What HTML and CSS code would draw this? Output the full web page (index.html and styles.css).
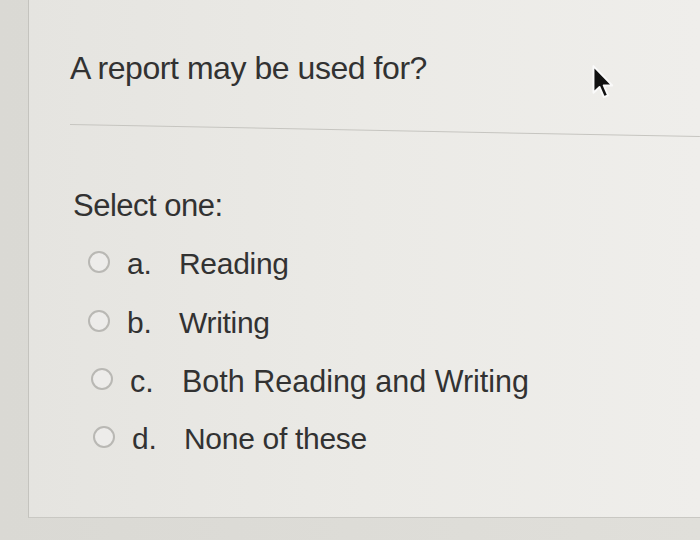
FILE: index.html
```html
<!DOCTYPE html>
<html>
<head>
<meta charset="utf-8">
<link rel="stylesheet" href="styles.css">
</head>
<body>
<div class="page">
  <div class="card">
    <h1 class="question">A report may be used for?</h1>
    <div class="divider"></div>
    <p class="prompt">Select one:</p>
    <ul class="options">
      <li class="option"><span class="radio"></span><span class="letter">a.</span><span class="text">Reading</span></li>
      <li class="option"><span class="radio"></span><span class="letter">b.</span><span class="text">Writing</span></li>
      <li class="option"><span class="radio"></span><span class="letter">c.</span><span class="text">Both Reading and Writing</span></li>
      <li class="option"><span class="radio"></span><span class="letter">d.</span><span class="text">None of these</span></li>
    </ul>
  </div>
  <svg class="cursor" width="24" height="36" viewBox="0 0 13 20">
    <path d="M1.2 1.2 L1.2 16 L4.6 12.8 L7 18.4 L9.3 17.4 L6.9 11.9 L11.6 11.9 Z" fill="#111" stroke="#fafafa" stroke-width="1.1" stroke-linejoin="round"/>
  </svg>
</div>
</body>
</html>
```
FILE: styles.css
```css
html, body {
  margin: 0;
  padding: 0;
}
body {
  width: 700px;
  height: 540px;
  overflow: hidden;
  background: linear-gradient(90deg, #dad9d4 0%, #e0dfda 100%);
  font-family: "Liberation Sans", Arial, sans-serif;
  color: #323232;
}
.page {
  position: relative;
  width: 700px;
  height: 540px;
}
.card {
  margin-left: 28px;
  height: 518px;
  border-left: 1.5px solid #c4c3be;
  border-bottom: 1.5px solid #c9c8c3;
  background: linear-gradient(90deg, #e5e4e0 0%, #ebeae6 50%, #efeeeb 100%);
  box-sizing: border-box;
  padding-top: 50px;
  padding-left: 41px;
}
.question {
  margin: 0;
  font-size: 32px;
  line-height: 36px;
  font-weight: normal;
  letter-spacing: -0.45px;
}
.divider {
  margin-top: 38px;
  height: 1px;
  background: #c6c5c0;
  transform-origin: 0 0;
  transform: rotate(1.1deg);
}
.prompt {
  margin: 63px 0 0 3px;
  font-size: 31px;
  line-height: 36px;
  letter-spacing: -0.5px;
}
.options {
  list-style: none;
  margin: 11px 0 0 0;
  padding: 0;
}
.option {
  display: flex;
  align-items: center;
  height: 58px;
  font-size: 30px;
  letter-spacing: -0.3px;
  padding-left: 18px;
}
.option:nth-child(2) { height: 59px; }
.option:nth-child(3) { padding-left: 21px; height: 58px; font-size: 30.5px; letter-spacing: 0; }
.option:nth-child(4) { padding-left: 23px; }
.radio {
  width: 18px;
  height: 18px;
  border: 2px solid #b9b8b4;
  border-radius: 50%;
  background: #edecea;
  flex: none;
  margin-top: -4px;
}
.letter {
  width: 52px;
  margin-left: 17px;
  flex: none;
}
.cursor {
  position: absolute;
  left: 591px;
  top: 64px;
}
```
